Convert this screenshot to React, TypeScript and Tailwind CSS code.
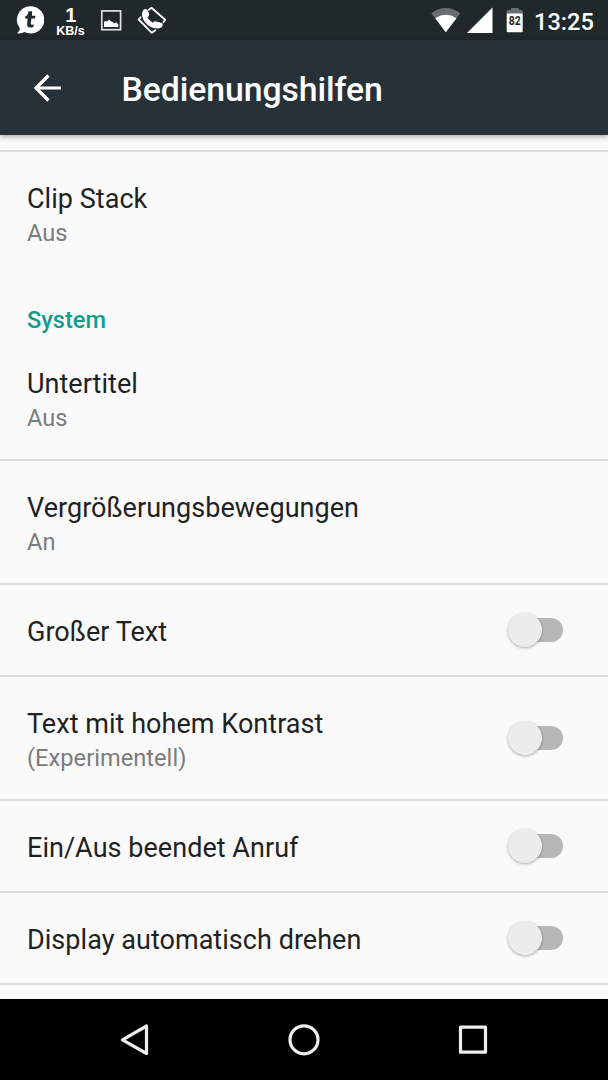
type RowProps = {
  title: string;
  summary?: string;
  toggle?: boolean;
  last?: boolean;
};

function Toggle() {
  return (
    <span role="switch" aria-checked="false" className="relative mr-[18.5px] flex h-[34px] w-[55px] shrink-0 items-center justify-end">
      <span className="h-6 w-11 rounded-full bg-[#b6b8b8]" />
      <span className="absolute left-0 top-0 size-[34px] rounded-full bg-[#ececec] shadow-[0_1px_3px_rgba(0,0,0,0.32)]" />
    </span>
  );
}

function Row({ title, summary, toggle, last }: RowProps) {
  const height = summary ? "h-[124px]" : "h-[92px]";
  const border = last ? "border-transparent" : "border-[#dddddd]";
  const padding = summary ? "pt-[6px]" : "pt-1";
  return (
    <li className={`flex shrink-0 items-center justify-between border-b-2 px-[27px] ${height} ${border}`}>
      <div className={`flex flex-col ${padding}`}>
        <span className="text-[27px] leading-[34px] tracking-[0.04px] text-[#1f2223]">{title}</span>
        {summary && <span className="text-[23.6px] leading-[34px] tracking-[0.04px] text-[#7b7c7c]">{summary}</span>}
      </div>
      {toggle && <Toggle />}
    </li>
  );
}

function StatusBar() {
  return (
    <div className="flex h-10 shrink-0 items-center justify-between bg-[#21282b] text-white">
      <div className="flex h-10 items-center">
        <svg className="ml-4 h-10 w-7" viewBox="16 0 28 40">
          <path d="M30.5 6.2A13.7 13.7 0 1 1 24.4 32.1Q21 34 17.2 33.2Q19.8 31 19.9 28.4A13.7 13.7 0 0 1 30.5 6.2Z" fill="#fff" />
          <path d="M28.6 11.2H32V15.8H35.6L34.8 18.5H31.4L30.8 23.2Q30.5 25.5 34.1 24.4L33.3 27Q26.5 29.2 27.1 23.5L27.7 18.5H24.8L25.3 16.4Q28.2 15.2 28.6 11.2Z" fill="#21282b" />
        </svg>
        <div className="ml-[11px] flex w-[31px] flex-col items-center pt-[2px] font-['Liberation_Sans',sans-serif] font-bold">
          <span className="scale-x-95 text-[21px] leading-[19px]">1</span>
          <span className="text-[12.5px] leading-[14px]">KB/s</span>
        </div>
        <svg className="ml-[14px] h-10 w-[22px]" viewBox="100 0 22 40">
          <rect x="101.8" y="10.9" width="18.8" height="18.8" fill="none" stroke="#dfe0e1" strokeWidth="1.7" />
          <path d="M104 27V22.2Q105.2 20.4 107 21.5L109 19.6L111.2 21.5Q113 21.5 114 23.4L116 22.2L118.4 24.5V27Z" fill="#fff" />
        </svg>
        <svg className="ml-[14px] h-10 w-[32px]" viewBox="136 0 32 40">
          <g fill="none" stroke="#fff" strokeWidth="1.8" strokeLinejoin="round" strokeLinecap="round">
            <path d="M148.5 10L151.5 7.8L165.2 19.8L163.4 22.2" />
            <path d="M140.6 17.2L138.7 19.5L151.8 32.8L155.3 30.3" />
          </g>
          <path d="M144 9.2Q146.3 8.6 147.4 10.2Q149 12.6 149.2 14.8Q148.9 16.3 147.4 17.4Q149.2 20.7 152.8 22.7Q154.5 20.9 156 21.4Q159.3 22 162.6 23.6Q163.4 25.2 161.6 27.2Q158.5 29.6 152.8 27.8Q146.4 25.3 143.2 19.4Q140.4 12.8 144 9.2Z" fill="#fff" />
        </svg>
      </div>
      <div className="flex h-10 items-center">
        <svg className="h-10 w-[96px]" viewBox="430 0 96 40">
          <path d="M431.3 13.2Q445.7 2.8 460.3 13.2L445.8 32.3Z" fill="#696e70" />
          <path d="M435.3 18.2Q445.7 11.4 456.5 18.2L445.8 32.3Z" fill="#fff" />
          <path d="M492.5 7.5V33H467Z" fill="#fff" />
          <path d="M511 8H518.5V10H521.4Q522.7 10 522.7 11.3V14H506.7V11.3Q506.7 10 508 10H511Z" fill="#696e70" />
          <path d="M506.7 13.5H522.7V31Q522.7 32.3 521.4 32.3H508Q506.7 32.3 506.7 31Z" fill="#fff" />
          <text x="514.7" y="24.8" textAnchor="middle" textLength="12" lengthAdjust="spacingAndGlyphs" fontFamily="Roboto, sans-serif" fontWeight="700" fontSize="12.3" fill="#21282b">82</text>
        </svg>
        <span className="ml-[8px] mr-[13px] w-[61px] pt-[3px] text-[23.6px] font-medium leading-7">13:25</span>
      </div>
    </div>
  );
}

export default function App() {
  return (
    <div className="flex h-[1080px] w-[608px] flex-col overflow-hidden bg-[#fafafa] font-[Roboto,sans-serif]">
      <StatusBar />
      <header className="relative z-10 flex h-[95px] shrink-0 items-center bg-[#273238] text-white shadow-[0_2px_5px_rgba(0,0,0,0.3)]">
        <button aria-label="Zurück" className="ml-[33px]">
          <svg className="size-[30px]" viewBox="0 0 30 30" fill="none" stroke="#fff" strokeWidth="3.2">
            <path d="M28 15H4M15.5 2.5L3 15L15.5 27.5" />
          </svg>
        </button>
        <h1 className="ml-[58.5px] pt-1 text-[33.75px] font-medium leading-10 tracking-[-0.06px]">Bedienungshilfen</h1>
      </header>
      <main className="flex min-h-0 grow flex-col overflow-hidden pt-[15px]">
        <ul className="flex flex-col border-t-2 border-[#dddddd]">
          <Row title="Clip Stack" summary="Aus" last />
        </ul>
        <h2 className="h-[61px] shrink-0 px-[27px] pt-[27px] text-[23.6px] font-medium leading-[34px] text-[#159b8b]">System</h2>
        <ul className="flex flex-col">
          <Row title="Untertitel" summary="Aus" />
          <Row title="Vergrößerungsbewegungen" summary="An" />
          <Row title="Großer Text" toggle />
          <Row title="Text mit hohem Kontrast" summary="(Experimentell)" toggle />
          <Row title="Ein/Aus beendet Anruf" toggle />
          <Row title="Display automatisch drehen" toggle />
        </ul>
      </main>
      <nav className="flex h-[81px] shrink-0 items-center justify-center gap-[137px] bg-black">
        <svg className="size-8" viewBox="0 0 32 32" fill="none" stroke="#eee" strokeWidth="3.2" strokeLinejoin="round">
          <path d="M27.5 2V29.5L3.5 15.8Z" />
        </svg>
        <svg className="size-8" viewBox="0 0 32 32" fill="none" stroke="#eee" strokeWidth="3.2">
          <circle cx="16" cy="15.8" r="14" />
        </svg>
        <svg className="size-8" viewBox="0 0 32 32" fill="none" stroke="#eee" strokeWidth="3.2" strokeLinejoin="round">
          <rect x="3.5" y="3.2" width="25" height="25" />
        </svg>
      </nav>
    </div>
  );
}
